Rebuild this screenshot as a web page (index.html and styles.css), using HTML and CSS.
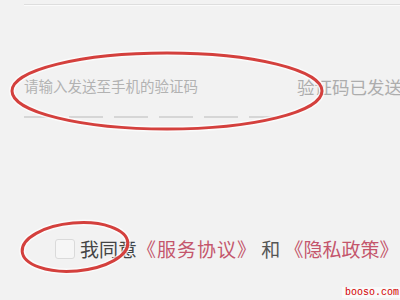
FILE: index.html
```html
<!DOCTYPE html>
<html lang="zh">
<head>
<meta charset="utf-8">
<link rel="stylesheet" href="styles.css">
</head>
<body>
<div class="page">
  <div class="rule"></div>
  <div class="code-row">
    <div class="code-input">
      <div class="placeholder">请输入发送至手机的验证码</div>
      <div class="dashes"><span></span><span></span><span></span><span></span><span></span><span></span></div>
    </div>
    <div class="sent">验证码已发送</div>
  </div>
  <div class="agree">
    <span class="check"></span>
    <span class="agree-line"><span class="agree-text">我同意</span><span class="link link-wide">《服务协议》</span> <span class="and">和</span> <span class="link">《隐私政策》</span></span>
  </div>
  <svg class="marks" width="400" height="300" viewBox="0 0 400 300">
    <g fill="none">
      <ellipse cx="167" cy="91" rx="155" ry="38" stroke="#ffffff" stroke-opacity="0.7" stroke-width="6"/>
      <ellipse cx="167" cy="91" rx="155" ry="38" stroke="#d4403d" stroke-width="3"/>
      <ellipse cx="75" cy="247" rx="53" ry="24" transform="rotate(-5 75 247)" stroke="#ffffff" stroke-opacity="0.7" stroke-width="6"/>
      <ellipse cx="75" cy="247" rx="53" ry="24" transform="rotate(-5 75 247)" stroke="#d4403d" stroke-width="3"/>
    </g>
  </svg>
  <div class="watermark">booso.com</div>
</div>
</body>
</html>
```
FILE: styles.css
```css
html, body {
  margin: 0;
  padding: 0;
  background: #f2f2f2;
}
.page {
  position: relative;
  width: 400px;
  height: 300px;
  overflow: hidden;
  padding-top: 4px;
  box-sizing: border-box;
  font-family: "Noto Sans CJK SC", "Noto Sans", sans-serif;
}
.rule {
  margin-left: 24px;
  height: 1px;
  background: #dedede;
  border-bottom: 1px solid #fbfbfb;
}
.code-row {
  display: flex;
  align-items: flex-start;
  margin-top: 70px;
  padding-left: 24px;
  white-space: nowrap;
}
.code-input {
  width: 259px;
  flex: none;
}
.placeholder {
  font-size: 14.5px;
  line-height: 20px;
  color: #b2b2b2;
}
.dashes {
  display: flex;
  gap: 11px;
  margin-top: 20px;
}
.dashes span {
  width: 34px;
  height: 2px;
  background: #d6d6d6;
}
.sent {
  margin-left: 14px;
  font-size: 17.5px;
  line-height: 22px;
  color: #adadad;
  flex: none;
}
.agree {
  display: flex;
  align-items: center;
  margin-top: 119px;
  padding-left: 55px;
  font-size: 19px;
  line-height: 24px;
  white-space: nowrap;
}
.check {
  width: 18px;
  height: 18px;
  border: 1px solid #dadada;
  border-radius: 3px;
  background: #f6f6f6;
  margin-right: 5px;
  flex: none;
}
.agree-text {
  color: #444444;
}
.and {
  color: #555555;
}
.link {
  color: #c4566c;
}
.link-wide {
  letter-spacing: 1px;
}
.marks {
  position: absolute;
  left: 0;
  top: 0;
}
.watermark {
  position: absolute;
  right: 0;
  bottom: 2px;
  padding: 0 1px 0 3px;
  font-family: "Liberation Mono", monospace;
  font-size: 10px;
  line-height: 11px;
  color: #d40000;
  background: rgba(255,255,255,0.5);
}
```
